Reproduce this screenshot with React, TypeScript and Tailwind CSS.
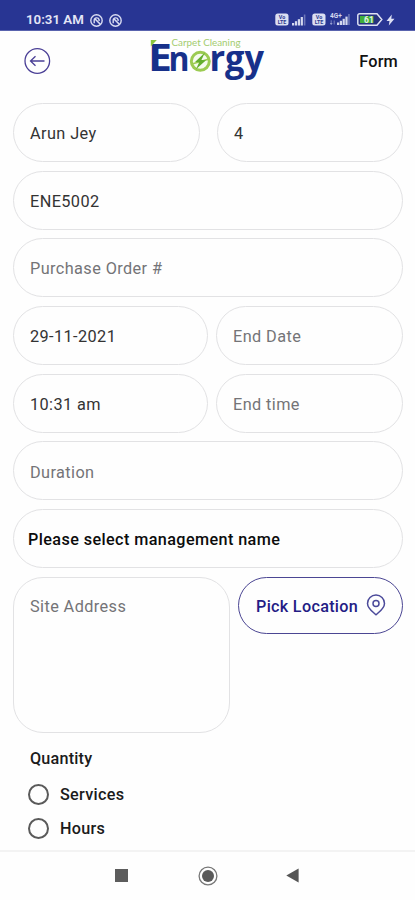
import type { ReactNode } from "react";

function Spiral() {
  return (
    <svg width="13" height="13" viewBox="0 0 13 13" fill="none" stroke="#d9dcf2" strokeWidth="1.4">
      <circle cx="6.5" cy="6.5" r="5.700" />
      <path d="M4.200 9.200V6.300a2.500 2.500 0 0 1 4.900-.6V7" />
      <path d="M4.800 4.800L10.300 10.300" strokeWidth="1.600" />
    </svg>
  );
}

function Volte() {
  return (
    <svg width="14" height="13" viewBox="0 0 14 13">
      <rect x="0.3" y="0.5" width="13.2" height="12" rx="2.5" fill="#dcdff2" />
      <text x="7" y="6.2" textAnchor="middle" fontFamily="Roboto, sans-serif" fontSize="5.4" fontWeight="700" fill="#2b3990">Vo</text>
      <text x="7" y="11.2" textAnchor="middle" fontFamily="Roboto, sans-serif" fontSize="5.4" fontWeight="700" fill="#2b3990">LTE</text>
    </svg>
  );
}

function Signal() {
  return (
    <svg width="14" height="12" viewBox="0 0 14 12" fill="#d5d9ef">
      <rect x="0" y="9" width="2.2" height="2.5" />
      <rect x="2.9" y="7.2" width="2.2" height="4.3" />
      <rect x="5.8" y="5.2" width="2.2" height="6.3" />
      <rect x="8.7" y="3" width="2.2" height="8.5" />
      <rect x="11.8" y="0.5" width="1.6" height="11" opacity="0.4" />
    </svg>
  );
}

function StatusBar() {
  return (
    <div className="flex h-[31px] shrink-0 items-start border-b border-[#5963ae] bg-[#283593] pt-[13px]">
      <div className="flex items-center gap-[6px] pl-[26px]">
        <span className="w-[58px] whitespace-nowrap text-[13.3px] font-semibold leading-[14px] text-[#e4e6f6]">10:31 AM</span>
        <Spiral />
        <Spiral />
      </div>
      <div className="ml-auto flex items-center pr-[20px]">
        <Volte />
        <div className="ml-[3px]"><Signal /></div>
        <div className="ml-[6px]"><Volte /></div>
        <svg className="ml-[4px]" width="21" height="13" viewBox="0 0 21 13" fill="#d5d9ef">
          <text x="0" y="5.2" fontFamily="Roboto, sans-serif" fontSize="6.5" fontWeight="700">4G+</text>
          <path d="M1.2 7.3v4M.2 10l1 1.5 1-1.5M4.2 11.5v-4" stroke="#8e97cc" strokeWidth="0.8" />
          <rect x="7" y="9.5" width="2.2" height="2.5" />
          <rect x="9.8" y="7.8" width="2.2" height="4.2" />
          <rect x="12.6" y="5.8" width="2.2" height="6.2" />
          <rect x="15.4" y="3.6" width="2.2" height="8.4" />
          <rect x="18.2" y="1" width="1.5" height="11" opacity="0.4" />
        </svg>
        <svg className="ml-[6px]" width="26" height="13" viewBox="0 0 26 13">
          <path d="M2.6.8H20l4.8 5.7L20 12.2H2.6A1.8 1.8 0 0 1 .8 10.4V2.6A1.8 1.8 0 0 1 2.6.8Z" fill="#26327e" stroke="#dde0f4" strokeWidth="1.5" />
          <rect x="3" y="3" width="13.5" height="7" fill="#3fae3c" />
          <text x="12" y="9.6" textAnchor="middle" fontFamily="Roboto, sans-serif" fontSize="8.5" fontWeight="700" fill="#e6f4e4">61</text>
        </svg>
        <svg className="ml-[3px]" width="9" height="12" viewBox="0 0 9 12">
          <path d="M5.8.5.5 7h3L2.8 11.5 8.5 4.8H5.3Z" fill="#dde0f4" />
        </svg>
      </div>
    </div>
  );
}

function Logo() {
  return (
    <svg className="block overflow-visible" width="120" height="50" viewBox="0 0 120 50" fontFamily="'Open Sans', sans-serif">
      <g fill="#17308a" fontWeight="700">
        <text x="-2" y="35.5" fontSize="38" textLength="24" lengthAdjust="spacingAndGlyphs">E</text>
        <text x="18.5" y="35.5" fontSize="34" textLength="21" lengthAdjust="spacingAndGlyphs">n</text>
        <text x="59.5" y="35.5" fontSize="35" textLength="54.5" lengthAdjust="spacingAndGlyphs">rgy</text>
      </g>
      <path d="M0.8 5H6.8L0.8 11.5Z" fill="#8cc63f" />
      <circle cx="50.300" cy="26.300" r="9" fill="#f6fbef" stroke="#9ccb52" strokeWidth="3" />
      <path d="M42 29L59 24" stroke="#9ccb52" strokeWidth="1.800" />
      <path d="M55 17.500L45 27l4.2.3-3.2 7 10-9-4.6-.2Z" fill="#64ae2f" />
      <text x="21.5" y="11.3" fontFamily="Lato, sans-serif" fontSize="9.600" textLength="69" lengthAdjust="spacingAndGlyphs" fill="#a3cc6e">Carpet Cleaning</text>
    </svg>
  );
}

function Header() {
  return (
    <header className="flex h-[72px] shrink-0 items-start pl-6 pr-[17px]">
      <svg className="mt-[17px]" width="27" height="27" viewBox="0 0 27 27" fill="none" stroke="#4a3f96" strokeWidth="1.3">
        <circle cx="13.3" cy="13" r="12.3" />
        <path d="M20.5 13H6.5M11.5 8.2L6.5 13l5 4.8" />
      </svg>
      <div className="ml-[99px] mt-[4px]"><Logo /></div>
      <h1 className="ml-auto mt-[20px] text-[16.3px] font-medium leading-[22px] tracking-[0.2px] text-[#111]">Form</h1>
    </header>
  );
}

function Field({ children, className = "", tone = "text-[#333]" }: { children: ReactNode; className?: string; tone?: string }) {
  return (
    <div className={`flex h-[59px] items-center rounded-full border-[1.5px] border-[#e2e2e4] pl-4 pt-[3.6px] text-[16.3px] tracking-[0.4px] ${tone} ${className}`}>
      {children}
    </div>
  );
}

const hint = "text-[#747477]";

function Radio({ label }: { label: string }) {
  return (
    <div className="flex h-[34px] items-center pl-[15px]">
      <span className="size-[21px] rounded-full border-2 border-[#5a5a5a]" />
      <span className="ml-[11px] pt-px text-[16.2px] font-medium tracking-[0.3px] text-[#1b1b1b]">{label}</span>
    </div>
  );
}

export default function App() {
  return (
    <div className="flex h-[900px] w-[415px] flex-col overflow-hidden bg-[#fefefe] font-['Roboto',sans-serif]">
      <StatusBar />
      <Header />
      <main className="flex min-h-0 flex-1 flex-col pl-[13px] pr-[12px]">
        <div className="flex flex-col gap-[8.7px]">
          <div className="flex gap-[17px]">
            <Field className="w-[187px]">Arun Jey</Field>
            <Field className="flex-1">4</Field>
          </div>
          <Field>ENE5002</Field>
          <Field tone={hint}>Purchase Order #</Field>
          <div className="flex gap-[8px]">
            <Field className="w-[195px]">29-11-2021</Field>
            <Field className="flex-1" tone={hint}>End Date</Field>
          </div>
          <div className="flex gap-[8px]">
            <Field className="w-[195px]">10:31 am</Field>
            <Field className="flex-1" tone={hint}>End time</Field>
          </div>
          <Field tone={hint}>Duration</Field>
          <Field tone="text-[#0c0c0c] font-medium"><span className="-ml-[2px] text-[16.2px]">Please select management name</span></Field>
          <div className="flex items-start gap-[8px]">
            <div className="h-[156px] w-[217px] rounded-[30px] border-[1.5px] border-[#e2e2e4] pl-4 pt-[18px] text-[16.3px] leading-[22px] tracking-[0.4px] text-[#747477]">Site Address</div>
            <button className="flex h-[57px] flex-1 items-center rounded-full border-[1.3px] border-[#4b4693] pl-[17px] text-[16.2px] font-medium tracking-[0.3px] text-[#241c85]">
              <span className="w-[103px] whitespace-nowrap pt-[3px] text-left">Pick Location</span>
              <svg className="ml-[7px]" width="20" height="22" viewBox="0 0 20 22" fill="none" stroke="#4b4a9a" strokeWidth="1.5">
                <path d="M10 20.8C7.8 18.6 1.5 14.6 1.5 9.4a8.5 8.3 0 0 1 17 0C18.5 14.6 12.2 18.6 10 20.8Z" />
                <circle cx="10" cy="9.6" r="3" />
              </svg>
            </button>
          </div>
        </div>
        <h2 className="mt-[15px] pl-[17px] text-[16.2px] font-medium leading-[22px] tracking-[0.2px] text-[#1b1b1b]">Quantity</h2>
        <div className="mt-[7.500px]">
          <Radio label="Services" />
          <Radio label="Hours" />
        </div>
      </main>
      <nav className="flex h-[50px] shrink-0 items-center border-t-2 border-[#f3f3f3] pb-px pl-[115px]">
        <div className="h-[13px] w-[13px] bg-[#5c5c5c]" />
        <svg className="ml-[70px]" width="20" height="20" viewBox="0 0 20 20">
          <circle cx="10" cy="10" r="8.9" fill="none" stroke="#777" strokeWidth="1.3" />
          <circle cx="10" cy="10" r="6" fill="#5a5a5a" />
        </svg>
        <svg className="ml-[68px]" width="13" height="15" viewBox="0 0 13 15">
          <path d="M0.3 7.5L12.6 0.6V14.4Z" fill="#555" />
        </svg>
      </nav>
    </div>
  );
}
